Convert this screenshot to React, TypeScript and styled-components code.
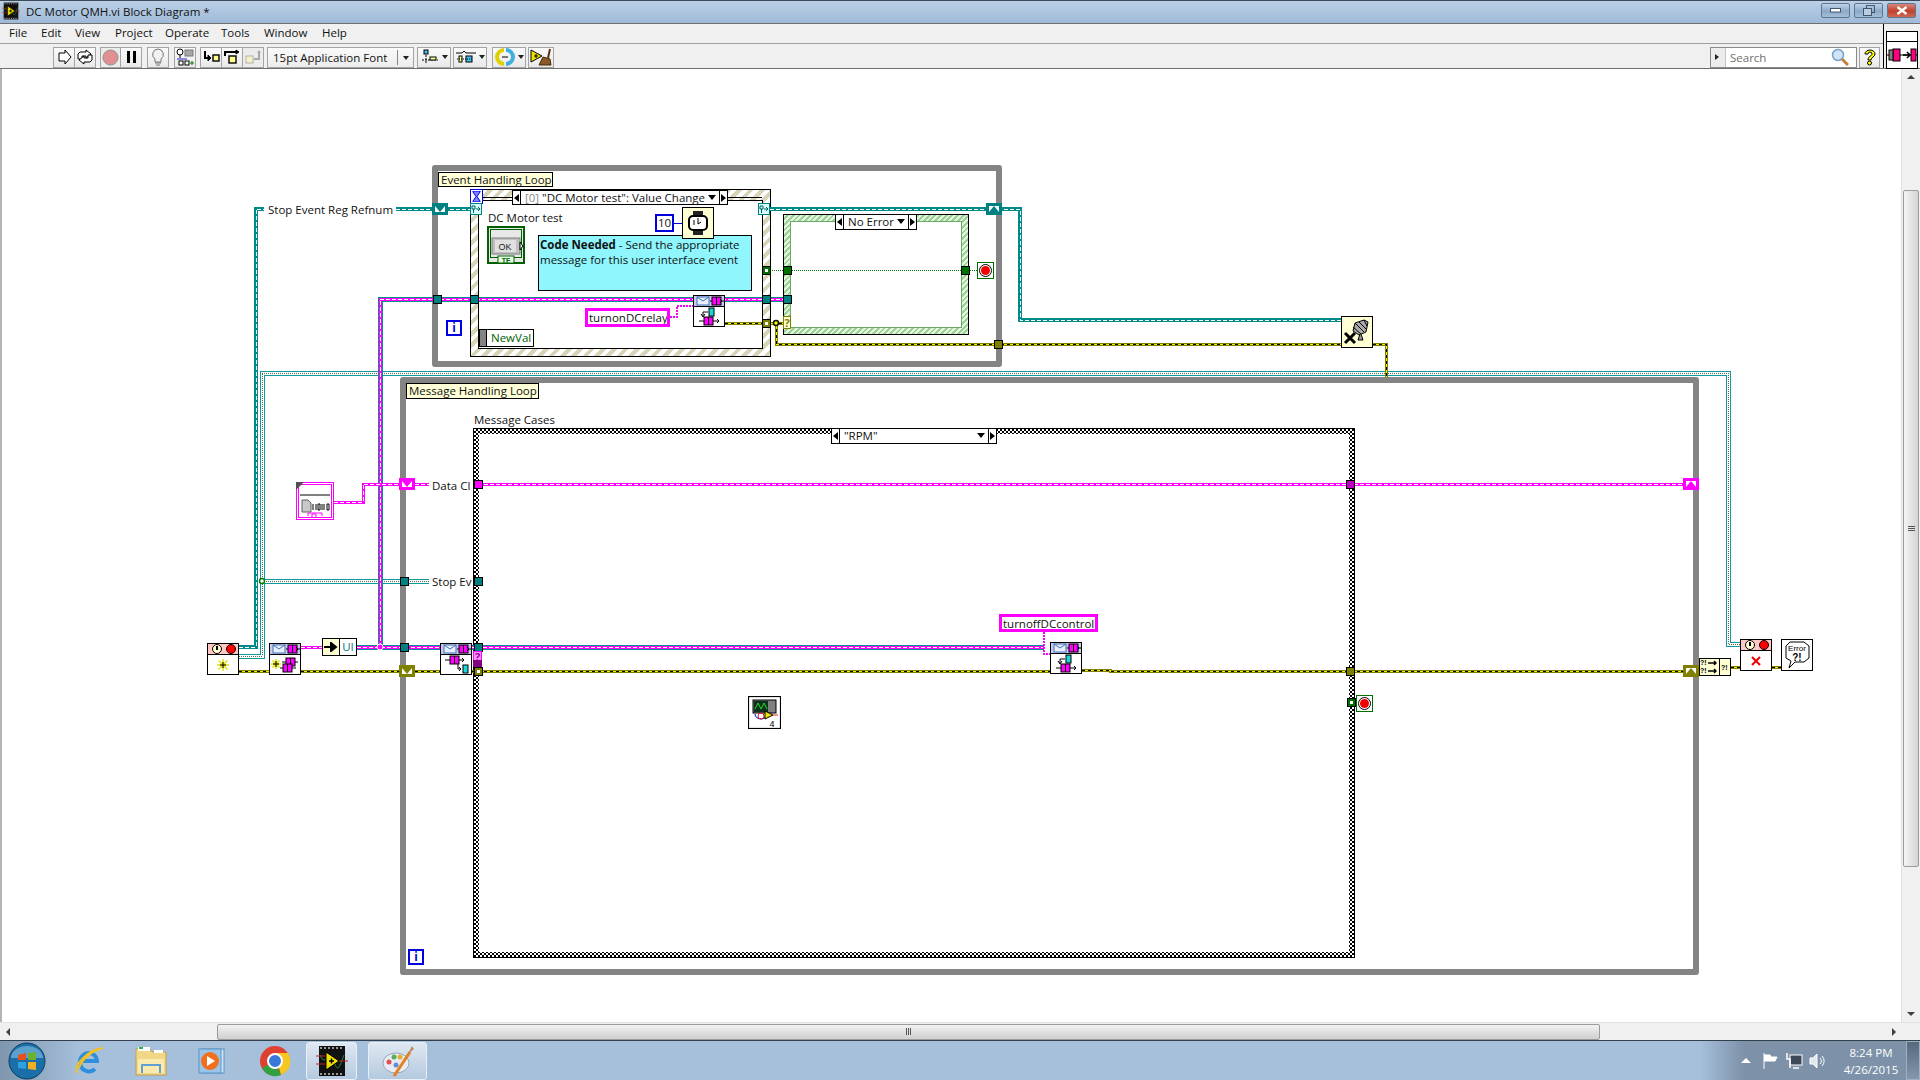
import { FC, ReactNode } from 'react';
import styled, { createGlobalStyle, css } from 'styled-components';

const UI_FONT = `'Open Sans', 'Noto Sans', sans-serif`;
const CANVAS_TOP = 69;

const GlobalStyle = createGlobalStyle`
  html, body {
    margin: 0;
    padding: 0;
    background: #fff;
    overflow: hidden;
  }
  svg { display: block; }
`;

/* ---------- window chrome ---------- */

const Window = styled.div`
  width: 1920px;
  height: 1080px;
  display: flex;
  flex-direction: column;
  font-family: ${UI_FONT};
  font-size: 11.5px;
  overflow: hidden;
`;

const TitleBar = styled.div`
  height: 23px;
  flex-shrink: 0;
  display: flex;
  align-items: center;
  box-sizing: border-box;
  border-top: 1px solid #3c4a58;
  background: linear-gradient(to bottom, #bcd0e6, #9fbad8);
`;

const TitleText = styled.span`
  color: #101010;
  margin: -2px 0 0 6px;
  flex: 1;
`;

const TitleIcon = styled.div`
  margin: -2px 0 0 2px;
`;

const CaptionButton = styled.div<{ $close?: boolean }>`
  width: 29px;
  height: 15px;
  margin-right: 4px;
  margin-top: -4px;
  box-sizing: border-box;
  border: 1px solid #5e7690;
  border-radius: 2px;
  display: flex;
  align-items: center;
  justify-content: center;
  background: ${p => p.$close
    ? 'linear-gradient(to bottom, #d8877a, #c1402c 55%, #cf6a55)'
    : 'linear-gradient(to bottom, #c0d2e6, #8ba9c8 55%, #a4bed8)'};
`;

const ChromeRow = styled.div`
  height: 46px;
  flex-shrink: 0;
  display: flex;
  border-top: 1px solid #6f6f6f;
  box-sizing: border-box;
  border-bottom: 1px solid #6f6f6f;
  background: #f0f0f0;
`;

const ToolArea = styled.div`
  flex: 1;
  display: flex;
  flex-direction: column;
`;

const MenuBar = styled.div`
  height: 20px;
  box-sizing: border-box;
  display: flex;
  align-items: center;
  padding: 0 0 2px 9px;
  border-bottom: 1px solid #a0a0a0;
  color: #111;
`;

const MenuItem = styled.span<{ $w: number }>`
  width: ${p => p.$w}px;
`;

const ToolBar = styled.div`
  flex: 1;
  display: flex;
  align-items: center;
  padding: 2px 3px 0 53px;
`;

const ToolGroup = styled.div<{ $gap?: number }>`
  display: flex;
  margin-right: ${p => p.$gap ?? 4}px;
`;

const ToolButton = styled.div<{ $w?: number; $off?: boolean }>`
  width: ${p => p.$w ?? 21}px;
  height: 21px;
  box-sizing: border-box;
  border: 1px solid #a4a4a4;
  margin-right: -1px;
  display: flex;
  align-items: center;
  justify-content: center;
  gap: 3px;
  background: ${p => p.$off ? '#ececec' : 'linear-gradient(to bottom, #fafafa, #e9e9e9)'};
  &:last-child { margin-right: 0; }
`;

const DropArrow = styled.span`
  width: 0;
  height: 0;
  border: 3px solid transparent;
  border-top: 4px solid #222;
  border-bottom: none;
`;

const FontRing = styled.div`
  width: 147px;
  height: 21px;
  box-sizing: border-box;
  border: 1px solid #a4a4a4;
  margin-right: 3px;
  display: flex;
  align-items: center;
  color: #111;
  padding-left: 5px;
  background: linear-gradient(to bottom, #fafafa, #ececec);
`;

const RingText = styled.span`
  flex: 1;
`;

const RingArrow = styled.span`
  width: 15px;
  height: 15px;
  border-left: 1px solid #888;
  position: relative;
  &::after {
    content: '';
    position: absolute;
    left: 5px;
    top: 6px;
    border: 3px solid transparent;
    border-top: 4px solid #222;
  }
`;

const SearchBox = styled.div`
  margin-left: auto;
  width: 147px;
  height: 21px;
  box-sizing: border-box;
  border: 1px solid #8a8a8a;
  display: flex;
  align-items: center;
  padding-right: 7px;
  background: #fff;
`;

const SearchPin = styled.div`
  width: 14px;
  height: 19px;
  background: #ececec;
  border-right: 1px solid #c4c4c4;
  position: relative;
  &::after {
    content: '';
    position: absolute;
    left: 4px;
    top: 6px;
    border: 3px solid transparent;
    border-left: 4px solid #222;
  }
`;

const SearchText = styled.span`
  flex: 1;
  padding-left: 4px;
  color: #6e6e6e;
`;

const HelpButton = styled(ToolButton)`
  margin: 0 0 0 2px;
`;

const IconPane = styled.div`
  width: 37px;
  box-sizing: border-box;
  border-left: 1px solid #000;
  padding: 7px 2px 0;
  background: #f0f0f0;
`;

const VIIconTop = styled.div`
  height: 9px;
  border: 1px solid #000;
  background: #fff;
`;

const VIIconBottom = styled.div`
  height: 26px;
  border: 1px solid #000;
  border-top: none;
  background: #fff;
  display: flex;
  align-items: center;
  justify-content: center;
`;

/* ---------- diagram canvas ---------- */

const Body = styled.div`
  flex: 1;
  display: flex;
  min-height: 0;
`;

const Canvas = styled.div`
  flex: 1;
  position: relative;
  overflow: hidden;
  background: #fff;
  box-shadow: inset 2px 0 #b4b4b4;
  color: #111;
`;

const WireLayer = styled.svg`
  position: absolute;
  left: 0;
  top: 0;
`;

interface Box {
  $x: number;
  $y: number;
  $w: number;
  $h: number;
}

const placed = css<Box>`
  position: absolute;
  box-sizing: border-box;
  left: ${p => p.$x}px;
  top: ${p => p.$y - CANVAS_TOP}px;
  width: ${p => p.$w}px;
  height: ${p => p.$h}px;
`;

const WhileLoop = styled.div<Box>`
  ${placed};
  border: 6px solid #848484;
  border-radius: 3px;
`;

const frameStyles = {
  event: css`
    padding: 10px 7px 7px;
    background: repeating-linear-gradient(135deg, #ffffff 0 4px, #d8d4b8 4px 8px);
  `,
  noError: css`
    padding: 6px;
    background: repeating-linear-gradient(135deg, #e4f6dc 0 2px, #9ed09a 2px 4px);
  `,
  checker: css`
    padding: 5px;
    background: repeating-conic-gradient(#000 0 25%, #fff 0 50%) 0 0 / 4px 4px;
  `,
};

const StructureFrame = styled.div<Box & { $kind: keyof typeof frameStyles }>`
  ${placed};
  border: 1px solid #000;
  ${p => frameStyles[p.$kind]};
`;

const StructureInner = styled.div<{ $edge?: string }>`
  width: 100%;
  height: 100%;
  box-sizing: border-box;
  background: #fff;
  ${p => p.$edge && `border: 1px solid ${p.$edge};`}
`;

const LoopLabel = styled.div<Box>`
  ${placed};
  background: #ffffd8;
  border: 1px solid #000;
  padding-left: 2px;
  line-height: 14px;
  white-space: nowrap;
  overflow: hidden;
`;

const FreeLabel = styled.span<{ $x: number; $y: number }>`
  position: absolute;
  left: ${p => p.$x}px;
  top: ${p => p.$y - CANVAS_TOP - 8}px;
  line-height: 16px;
  white-space: nowrap;
  padding-right: 2px;
  background: #fff;
`;

const CaseSelector = styled.div<Box>`
  ${placed};
  display: flex;
  align-items: stretch;
  border: 1px solid #000;
  background: #fff;
  line-height: 14px;
  white-space: nowrap;
`;

const SelectorStep = styled.div<{ $next?: boolean }>`
  width: 7px;
  flex-shrink: 0;
  position: relative;
  ${p => p.$next ? 'border-left: 1px solid #000;' : 'border-right: 1px solid #000;'}
  &::after {
    content: '';
    position: absolute;
    top: 3px;
    ${p => p.$next
      ? 'left: 1px; border: 4px solid transparent; border-left: 5px solid #000; border-right: none;'
      : 'right: 1px; border: 4px solid transparent; border-right: 5px solid #000; border-left: none;'}
  }
`;

const SelectorValue = styled.div`
  flex: 1;
  padding-left: 4px;
  position: relative;
  &::after {
    content: '';
    position: absolute;
    right: 3px;
    top: 4px;
    border: 4px solid transparent;
    border-top: 5px solid #000;
    border-bottom: none;
  }
`;

const Dim = styled.span`
  color: #8a8a8a;
`;

const StringConst = styled.div<Box>`
  ${placed};
  border: 3px solid #ff00ff;
  background: #fff;
  line-height: 13px;
  padding-left: 1px;
  white-space: nowrap;
  overflow: hidden;
`;

const NumericConst = styled.div<Box>`
  ${placed};
  border: 2px solid #0000e0;
  background: #fff;
  display: flex;
  align-items: center;
  justify-content: center;
  line-height: 14px;
`;

const IterationTerminal = styled.div<Box>`
  ${placed};
  border: 2px solid #0000e0;
  background: #fff;
  color: #0000e0;
  font-weight: 700;
  display: flex;
  align-items: center;
  justify-content: center;
  line-height: 12px;
`;

const CommentNote = styled.div<Box>`
  ${placed};
  background: #8ef6fc;
  border: 1px solid #000;
  padding: 1px 1px;
  line-height: 15px;
  white-space: nowrap;
`;

const DataNode = styled.div<Box>`
  ${placed};
  display: flex;
  align-items: center;
  color: #006000;
  background: #fff;
  border: 1px solid #000;
  line-height: 14px;
`;

const NodeGrip = styled.div`
  width: 6px;
  height: 100%;
  margin-right: 4px;
  background: #848484;
  border-right: 1px solid #000;
`;

const FunctionNode = styled.div<Box>`
  ${placed};
  background: #fff;
  border: 1px solid #000;
  display: flex;
  flex-direction: column;
`;

const bandTones = { blue: '#cacaf0', pink: '#ffc8c8' };

const NodeBand = styled.div<{ $tone: keyof typeof bandTones }>`
  height: 10px;
  flex-shrink: 0;
  background: ${p => bandTones[p.$tone]};
  border-bottom: 1px solid #000;
`;

const NodeBody = styled.div`
  flex: 1;
  display: flex;
  align-items: center;
  justify-content: center;
`;

const IconNode = styled.div<Box>`
  ${placed};
  background: #ffffd4;
  border: 1px solid #000;
  display: flex;
  align-items: center;
  justify-content: center;
  overflow: hidden;
`;

const WhiteIconNode = styled(IconNode)`
  background: #fff;
`;

const SplitNode = styled.div<Box>`
  ${placed};
  display: flex;
  border: 1px solid #000;
`;

const SplitCell = styled.div<{ $w: number; $white?: boolean }>`
  width: ${p => p.$w}px;
  display: flex;
  align-items: center;
  justify-content: center;
  background: ${p => p.$white ? '#fff' : '#ffffd4'};
  color: #007878;
  border-right: 1px solid #000;
  line-height: 12px;
  &:last-child { border-right: none; flex: 1; }
`;

const FreeIcon = styled.div<Box>`
  ${placed};
`;

const Tunnel = styled.div<{ $cx: number; $cy: number; $fill: string; $edge?: string }>`
  position: absolute;
  box-sizing: border-box;
  width: 9px;
  height: 9px;
  left: ${p => p.$cx - 4.5}px;
  top: ${p => p.$cy - 4.5 - CANVAS_TOP}px;
  background: ${p => p.$fill};
  border: 1px solid ${p => p.$edge ?? '#000'};
`;

const BoolTunnel = styled(Tunnel)`
  &::after {
    content: '';
    position: absolute;
    left: 2px;
    top: 2px;
    width: 3px;
    height: 3px;
    background: #fff;
  }
`;

const ShiftRegister = styled.div<{ $cx: number; $cy: number; $color: string; $up?: boolean }>`
  position: absolute;
  box-sizing: border-box;
  width: 16px;
  height: 12px;
  left: ${p => p.$cx - 8}px;
  top: ${p => p.$cy - 6 - CANVAS_TOP}px;
  border: 3px solid ${p => p.$color};
  background: #fff;
  &::after {
    content: '';
    position: absolute;
    left: 0;
    top: 0;
    border: 5px solid transparent;
    ${p => p.$up
      ? `border-bottom: 6px solid ${p.$color}; border-top: none;`
      : `border-top: 6px solid ${p.$color}; border-bottom: none;`}
  }
`;

const EventRegTerminal = styled.div<Box>`
  ${placed};
  background: #d8ffff;
  border: 1px solid #008080;
  display: flex;
  align-items: center;
  justify-content: center;
`;

const SelectorTerminal = styled.div<Box & { $fill: string; $edge: string }>`
  ${placed};
  background: ${p => p.$fill};
  border: 1px solid ${p => p.$edge};
  display: flex;
  align-items: center;
  justify-content: center;
  font-size: 11px;
  font-weight: 700;
  line-height: 10px;
  color: #808000;
`;

const MagentaQuestion = styled(SelectorTerminal)`
  color: #a000a0;
`;

/* ---------- scroll bars ---------- */

const VScroll = styled.div`
  width: 19px;
  flex-shrink: 0;
  background: #f0f0f0;
  border-left: 1px solid #e0e0e0;
  box-sizing: border-box;
  display: flex;
  flex-direction: column;
  align-items: center;
`;

const ScrollArrow = styled.div<{ $dir: 'up' | 'down' | 'left' | 'right' }>`
  width: 0;
  height: 0;
  flex-shrink: 0;
  border: 4px solid transparent;
  ${p => p.$dir === 'up' && 'border-bottom: 4px solid #404040; border-top: none; margin: 6px 0 0;'}
  ${p => p.$dir === 'down' && 'border-top: 4px solid #404040; border-bottom: none; margin: 0 0 6px;'}
  ${p => p.$dir === 'left' && 'border-right: 4px solid #404040; border-left: none; margin: 0 0 0 6px;'}
  ${p => p.$dir === 'right' && 'border-left: 4px solid #404040; border-right: none; margin: 0 24px 0 0;'}
`;

const VThumb = styled.div`
  width: 16px;
  height: 677px;
  margin-top: 111px;
  margin-bottom: auto;
  box-sizing: border-box;
  border: 1px solid #9c9c9c;
  border-radius: 2px;
  background: linear-gradient(to right, #f4f4f4, #d4d4d4);
  display: flex;
  align-items: center;
  justify-content: center;
`;

const HScroll = styled.div`
  height: 18px;
  flex-shrink: 0;
  display: flex;
  align-items: center;
  background: #f0f0f0;
  border-top: 1px solid #e2e2e2;
  box-sizing: border-box;
`;

const HThumb = styled.div`
  width: 1383px;
  height: 16px;
  margin-left: 207px;
  margin-right: auto;
  box-sizing: border-box;
  border: 1px solid #9c9c9c;
  border-radius: 2px;
  background: linear-gradient(to bottom, #f2f2f2, #cfcfcf);
  display: flex;
  align-items: center;
  justify-content: center;
`;

const Grip = styled.div<{ $vertical?: boolean }>`
  ${p => p.$vertical
    ? 'width: 7px; height: 5px; background: repeating-linear-gradient(to bottom, #555 0 1px, transparent 1px 2px);'
    : 'width: 5px; height: 7px; background: repeating-linear-gradient(to right, #555 0 1px, transparent 1px 2px);'}
`;

/* ---------- taskbar ---------- */

const Taskbar = styled.div`
  height: 40px;
  flex-shrink: 0;
  display: flex;
  align-items: center;
  box-sizing: border-box;
  border-top: 1px solid #30404f;
  background: linear-gradient(to right, #7f96ae 0, #a6bfdb 80px, #a6bfdb 1700px, #7d91a8 1745px);
`;

const StartOrb = styled.div`
  width: 58px;
  display: flex;
  justify-content: center;
  padding-right: 4px;
  box-sizing: border-box;
`;

const TaskIcon = styled.div`
  width: 62px;
  display: flex;
  justify-content: center;
`;

const TaskButton = styled.div<{ $w: number }>`
  width: ${p => p.$w}px;
  height: 38px;
  box-sizing: border-box;
  margin-right: 11px;
  border: 1px solid #e8eff6;
  border-radius: 3px;
  background: linear-gradient(to bottom, #dfe8f2, #b4c9df);
  display: flex;
  align-items: center;
  justify-content: center;
`;

const Tray = styled.div`
  margin-left: auto;
  display: flex;
  align-items: center;
  height: 100%;
`;

const TrayIcon = styled.div`
  width: 24px;
  display: flex;
  justify-content: center;
`;

const Clock = styled.div`
  width: 70px;
  margin-left: 6px;
  text-align: center;
  color: #fff;
  line-height: 17px;
`;

const ShowDesktop = styled.div`
  width: 14px;
  height: 100%;
  border: 1px solid #9fb0c2;
  box-sizing: border-box;
  background: linear-gradient(to bottom, #566a7e, #8496aa);
`;

/* ---------- wires ---------- */

type WireKind = 'refnum' | 'event' | 'queue' | 'cluster' | 'error' | 'bool' | 'thinPink' | 'black' | 'blue';

const wireLayers: Record<WireKind, { color: string; width: number; dash?: string }[]> = {
  refnum: [
    { color: '#008a8a', width: 4 },
    { color: '#ffffff', width: 1, dash: '4 2' },
  ],
  event: [
    { color: '#109a9a', width: 5 },
    { color: '#ffffff', width: 3 },
    { color: '#5a6a50', width: 1, dash: '1 1' },
  ],
  queue: [
    { color: '#009090', width: 5 },
    { color: '#ff00ff', width: 3 },
    { color: '#ffffff', width: 1, dash: '4 2' },
  ],
  cluster: [
    { color: '#ff00ff', width: 3 },
    { color: '#ffffff', width: 1, dash: '4 2' },
  ],
  error: [
    { color: '#808000', width: 3 },
    { color: '#f4f400', width: 1 },
    { color: '#000', width: 1, dash: '3 3' },
  ],
  bool: [{ color: '#008000', width: 1, dash: '1 1' }],
  thinPink: [{ color: '#ff00ff', width: 2, dash: '2 1' }],
  black: [{ color: '#000', width: 1 }],
  blue: [{ color: '#0000e0', width: 1 }],
};

const wires: { kind: WireKind; points: number[][] }[] = [
  { kind: 'event', points: [[239, 656], [262, 656], [262, 373], [1728, 373], [1728, 644], [1741, 644]] },
  { kind: 'event', points: [[262, 581], [429, 581]] },
  { kind: 'refnum', points: [[239, 647], [256, 647], [256, 209], [264, 209]] },
  { kind: 'refnum', points: [[396, 209], [470, 209]] },
  { kind: 'refnum', points: [[770, 209], [1020, 209], [1020, 320], [1341, 320]] },
  { kind: 'queue', points: [[380, 647], [380, 299], [790, 299]] },
  { kind: 'queue', points: [[357, 647], [1044, 647]] },
  { kind: 'cluster', points: [[301, 647], [322, 647]] },
  { kind: 'cluster', points: [[334, 502], [363, 502], [363, 484], [399, 484]] },
  { kind: 'cluster', points: [[415, 484], [429, 484]] },
  { kind: 'cluster', points: [[478, 484], [1691, 484]] },
  { kind: 'error', points: [[239, 671], [269, 671]] },
  { kind: 'error', points: [[301, 671], [440, 671]] },
  { kind: 'error', points: [[472, 671], [1050, 671]] },
  { kind: 'error', points: [[1082, 670], [1110, 670], [1110, 671], [1699, 671]] },
  { kind: 'error', points: [[1731, 667], [1741, 667]] },
  { kind: 'error', points: [[1772, 667], [1781, 667]] },
  { kind: 'error', points: [[725, 323], [787, 323]] },
  { kind: 'error', points: [[776, 323], [776, 344], [1341, 344]] },
  { kind: 'error', points: [[1373, 344], [1386, 344], [1386, 377]] },
  { kind: 'bool', points: [[770, 270], [977, 270]] },
  { kind: 'thinPink', points: [[670, 317], [677, 317], [677, 306], [693, 306]] },
  { kind: 'thinPink', points: [[1044, 632], [1044, 654], [1050, 654]] },
  { kind: 'black', points: [[483, 197], [512, 197]] },
  { kind: 'black', points: [[728, 197], [762, 197]] },
  { kind: 'blue', points: [[674, 223], [682, 223]] },
];

const Wires: FC = () => (
  <WireLayer width={1901} height={953} viewBox={`0 ${CANVAS_TOP} 1901 953`}>
    {wires.map((wire, i) =>
      wireLayers[wire.kind].map((layer, j) => (
        <polyline
          key={`${i}-${j}`}
          points={wire.points.map(p => p.join(',')).join(' ')}
          fill="none"
          stroke={layer.color}
          strokeWidth={layer.width}
          strokeDasharray={layer.dash}
          shapeRendering="crispEdges"
        />
      ))
    )}
    <circle cx={262} cy={581} r={2.5} fill="#fff" stroke="#008000" strokeWidth={1.5} />
    <circle cx={380} cy={647} r={3} fill="#ff00ff" stroke="#fff" strokeWidth={1} />
    <circle cx={776} cy={323} r={2.5} fill="#f4f400" stroke="#101000" strokeWidth={1.5} />
  </WireLayer>
);

/* ---------- small drawings ---------- */

const Svg: FC<{ w: number; h: number; children: ReactNode }> = ({ w, h, children }) => (
  <svg width={w} height={h} viewBox={`0 0 ${w} ${h}`}>{children}</svg>
);

const QueueBox: FC<{ x: number; y: number }> = ({ x, y }) => (
  <g>
    <rect x={x} y={y} width={9} height={8} fill="#ff00ff" stroke="#000" />
    <line x1={x + 4.5} y1={y} x2={x + 4.5} y2={y + 8} stroke="#000" />
  </g>
);

const EnvelopeBand: FC = () => (
  <Svg w={30} h={10}>
    <rect x={3} y={1} width={12} height={8} fill="#e8f0ff" stroke="#4070b0" />
    <path d="M3 1l6 4 6-4" fill="none" stroke="#4070b0" />
    <line x1={16} y1={5} x2={30} y2={5} stroke="#000" />
    <QueueBox x={18} y={1} />
    <path d="M26 3l2 2-2 2" fill="none" stroke="#000" />
  </Svg>
);

const EnqueueBody: FC = () => (
  <Svg w={30} h={20}>
    <rect x={15} y={1} width={5} height={8} fill="#18d8d8" stroke="#000" />
    <path d="M14 5H9v4M7 7l2 3 2-3" fill="none" stroke="#000" />
    <line x1={5} y1={14} x2={25} y2={14} stroke="#000" />
    <QueueBox x={10} y={10} />
    <path d="M23 12l2 2-2 2" fill="none" stroke="#000" />
  </Svg>
);

const ObtainBody: FC = () => (
  <Svg w={30} h={20}>
    <path d="M6 4v10M1 9h10M2.5 5.5l7 7M9.5 5.5l-7 7" stroke="#e0e000" strokeWidth={1.5} />
    <path d="M6 6v6M3 9h6" stroke="#000" />
    <line x1={12} y1={7} x2={28} y2={7} stroke="#000" />
    <line x1={10} y1={13} x2={26} y2={13} stroke="#000" />
    <QueueBox x={16} y={3} />
    <QueueBox x={13} y={9} />
  </Svg>
);

const ReleaseBody: FC = () => (
  <Svg w={30} h={20}>
    <line x1={4} y1={5} x2={23} y2={5} stroke="#000" />
    <QueueBox x={9} y={1} />
    <path d="M21 3l2 2-2 2" fill="none" stroke="#000" />
    <path d="M17 9v5h3M18 12l2 2-2 2" fill="none" stroke="#000" />
    <rect x={22} y={10} width={5} height={8} fill="#18d8d8" stroke="#000" />
  </Svg>
);

const EventBand: FC = () => (
  <Svg w={30} h={10}>
    <circle cx={9} cy={5} r={4.5} fill="#ffffd0" stroke="#000" />
    <rect x={8} y={2} width={2} height={4} fill="#000" />
    <circle cx={23} cy={5} r={4.5} fill="#f00" stroke="#000" />
  </Svg>
);

const StopButton: FC = () => (
  <Svg w={17} h={17}>
    <rect x={0.5} y={0.5} width={16} height={16} fill="#fff" stroke="#007000" />
    <circle cx={8.5} cy={8.5} r={6} fill="#fff" stroke="#000" />
    <circle cx={8.5} cy={8.5} r={4.5} fill="#f00000" />
  </Svg>
);

const OkTerminal: FC = () => (
  <Svg w={38} h={38}>
    <rect x={1} y={1} width={36} height={36} fill="#e8e8e8" stroke="#006000" strokeWidth={2} />
    <rect x={3.5} y={3.5} width={31} height={28} fill="none" stroke="#006000" />
    <rect x={5} y={12} width={28} height={16} fill="#c0c0c0" stroke="#808080" />
    <rect x={8} y={14} width={21} height={12} fill="#e0e0e0" />
    <text x={18} y={24} fontSize={9} fontFamily="Liberation Sans, sans-serif" textAnchor="middle" fill="#222">OK</text>
    <path d="M33 16l3 4-3 4z" fill="#fff" stroke="#000" />
    <rect x={11} y={30} width={16} height={7} fill="#e8ffe8" stroke="#006000" />
    <text x={19} y={36.5} fontSize={7} fontWeight={700} fontFamily="Liberation Sans, sans-serif" textAnchor="middle" fill="#006000">TF</text>
  </Svg>
);

const WatchIcon: FC = () => (
  <Svg w={24} h={24}>
    <rect x={7} y={0} width={10} height={24} fill="#222" />
    <rect x={3} y={5} width={18} height={14} rx={4} fill="#fff" stroke="#000" strokeWidth={2} />
    <path d="M12 7v6M12 13l3-2" stroke="#000" />
    <path d="M8 9v5" stroke="#000" />
  </Svg>
);

const DataFileIcon: FC = () => (
  <Svg w={38} h={38}>
    <rect x={0.5} y={0.5} width={37} height={37} fill="#fff" stroke="#ff00ff" />
    <rect x={2.5} y={2.5} width={33} height={33} fill="#fff" stroke="#ff00ff" />
    <path d="M0 0h8L0 8z" fill="#505050" />
    <line x1={4} y1={13} x2={34} y2={13} stroke="#000" />
    <path d="M6 18h6l3 3v9H6z" fill="#c8c8c8" stroke="#606060" />
    <path d="M17 22v6M20 22v6M22 22h2v6h-2zM26 22v6M28 22v6M31 22h2v6h-2z" fill="none" stroke="#000" />
    <path d="M12 34v-3h14v3M16 35v-3h4v3" fill="none" stroke="#ff00ff" />
  </Svg>
);

const UnregisterIcon: FC = () => (
  <Svg w={30} h={30}>
    <path d="M13 6l9-3 4 2-2 10-7 3-6-4z" fill="#aaa" stroke="#000" />
    <path d="M13 6l9 9M17 5l7 7M11 10l8 7M22 3l3 6" stroke="#000" />
    <path d="M19 17l2 6h-5l2-6" fill="#999" stroke="#000" />
    <path d="M3 16l10 10M13 16L3 26" stroke="#000" strokeWidth={3} />
  </Svg>
);

const MergeIcon: FC = () => (
  <Svg w={19} h={16}>
    <text x={0} y={6} fontSize={7} fontWeight={700} fontFamily="Liberation Sans, sans-serif">?!</text>
    <text x={0} y={14} fontSize={7} fontWeight={700} fontFamily="Liberation Sans, sans-serif">?!</text>
    <path d="M8 4h8M14 2l2 2-2 2M8 12h8M14 10l2 2-2 2" fill="none" stroke="#000" strokeWidth={1.4} />
  </Svg>
);

const ErrorBubbleIcon: FC = () => (
  <Svg w={30} h={30}>
    <path d="M8 2h14l5 4v12l-5 4H13l-6 6 2-7-5-3V6z" fill="#fff" stroke="#000" />
    <text x={15} y={11} fontSize={8} fontFamily="Liberation Sans, sans-serif" textAnchor="middle">Error</text>
    <text x={15} y={21} fontSize={10} fontWeight={700} fontFamily="Liberation Sans, sans-serif" textAnchor="middle">?!</text>
  </Svg>
);

const ScopeIcon: FC = () => (
  <Svg w={33} h={33}>
    <rect x={0.5} y={0.5} width={32} height={32} fill="#fff" stroke="#000" strokeWidth={1.2} />
    <rect x={5} y={4} width={23} height={13} fill="#808080" stroke="#000" />
    <rect x={6} y={5} width={14} height={11} fill="#103020" />
    <path d="M7 13l3-6 3 6 3-6 3 6" fill="none" stroke="#20e020" />
    <path d="M7 18a6 5 0 0 0 12 0" fill="none" stroke="#0000c0" />
    <circle cx={13} cy={20} r={3} fill="none" stroke="#e02020" />
    <path d="M17 15l8 4-8 4z" fill="#f0e000" stroke="#000" />
    <path d="M25 19h5" stroke="#e02020" />
    <text x={24} y={31} fontSize={9} fontFamily="Liberation Sans, sans-serif" textAnchor="middle">4</text>
  </Svg>
);

const ToolIcons: Record<string, ReactNode> = {
  run: <Svg w={16} h={16}><path d="M3 4h6V1l6 7-6 7v-3H3z" fill="#fff" stroke="#000" /></Svg>,
  runCont: (
    <Svg w={16} h={16}>
      <path d="M3 3h6V1l5 4-5 4V7H5v3H1V5z" fill="#fff" stroke="#000" />
      <path d="M13 13H7v2l-5-4 5-4v2h4V6h4v5z" fill="#fff" stroke="#000" />
    </Svg>
  ),
  abort: <Svg w={17} h={17}><circle cx={8.5} cy={8.5} r={7.5} fill="#e09090" stroke="#909090" /></Svg>,
  pause: <Svg w={13} h={14}><path d="M2 1h3v12H2zM8 1h3v12H8z" fill="#000" /></Svg>,
  bulb: (
    <Svg w={14} h={18}>
      <path d="M7 1a5.5 5.5 0 0 0-3 10v3h6v-3A5.5 5.5 0 0 0 7 1z" fill="#f2f2f2" stroke="#777" />
      <path d="M4 15h6M5 17h4" stroke="#777" />
    </Svg>
  ),
  retain: (
    <Svg w={18} h={18}>
      <circle cx={4} cy={4} r={3} fill="#fff" stroke="#000" />
      <rect x={9} y={2} width={8} height={6} fill="#a8a8a8" stroke="#777" />
      <path d="M4 7v3" stroke="#000" />
      <path d="M1 11h10" stroke="#2020d0" />
      <rect x={3} y={13} width={4} height={4} fill="#fff" stroke="#000" />
      <rect x={9} y={13} width={4} height={4} fill="#fff" stroke="#000" />
      <path d="M14 15h4M16 13v4" stroke="#008000" />
    </Svg>
  ),
  stepInto: (
    <Svg w={17} h={14}>
      <path d="M2 1v7h4" fill="none" stroke="#000" strokeWidth={2} />
      <path d="M5 5l3 3-3 3z" fill="#000" stroke="#000" />
      <rect x={10} y={5} width={6} height={6} fill="#ffff90" stroke="#000" strokeWidth={1.4} />
    </Svg>
  ),
  stepOver: (
    <Svg w={17} h={16}>
      <path d="M1 7V3h12" fill="none" stroke="#000" strokeWidth={2} />
      <path d="M12 1l3 2-3 2z" fill="#000" stroke="#000" />
      <rect x={5} y={7} width={7} height={7} fill="#ffff90" stroke="#000" strokeWidth={1.4} />
    </Svg>
  ),
  stepOut: (
    <Svg w={17} h={16}>
      <rect x={1} y={7} width={7} height={7} fill="#f4f4c8" stroke="#b0b0b0" />
      <path d="M9 10h5V4" fill="none" stroke="#a8a8a8" strokeWidth={2} />
      <path d="M12 4l2-3 2 3z" fill="#a8a8a8" />
    </Svg>
  ),
  align: (
    <Svg w={18} h={16}>
      <rect x={3} y={1} width={4} height={4} fill="#40c0f0" stroke="#000" />
      <path d="M5 6v8M1 11h16" stroke="#000" strokeDasharray="2 1" />
      <rect x={9} y={8} width={6} height={3} fill="#ffff90" stroke="#000" />
    </Svg>
  ),
  distribute: (
    <Svg w={20} h={14}>
      <path d="M0 3h6l2-2 2 2h10" fill="none" stroke="#000" />
      <rect x={3} y={6} width={3} height={6} fill="#ffff90" stroke="#000" />
      <rect x={10} y={6} width={6} height={6} fill="#40c0f0" stroke="#000" />
      <path d="M1 9h15" stroke="#000" strokeDasharray="1 1" />
    </Svg>
  ),
  reorder: (
    <Svg w={20} h={18}>
      <path d="M9 2a7 7 0 0 0 0 14" fill="none" stroke="#e0d000" strokeWidth={4} />
      <path d="M11 2a7 7 0 0 1 0 14" fill="none" stroke="#40b0e0" strokeWidth={4} />
      <path d="M7 9h6" stroke="#000" />
    </Svg>
  ),
  cleanup: (
    <Svg w={22} h={18}>
      <path d="M1 2l11 6-11 6z" fill="#f0e000" stroke="#000" />
      <path d="M4 8h4M6 6v4" stroke="#000" />
      <path d="M20 1l-2 9" stroke="#5a3410" strokeWidth={2} />
      <path d="M9 17l4-8 7 2 1 6z" fill="#8a5a28" stroke="#4a2a08" />
    </Svg>
  ),
  help: (
    <Svg w={14} h={17}>
      <path d="M2 5a5 4 0 0 1 10 0c0 3-4 3-4 6H5c0-4 4-4 4-6a2 2 0 0 0-4 0z" fill="#ffff00" stroke="#000" />
      <circle cx={6.5} cy={14} r={2} fill="#ffff00" stroke="#000" />
    </Svg>
  ),
  search: (
    <Svg w={18} h={18}>
      <circle cx={7} cy={7} r={5.5} fill="#cfe6fa" stroke="#7aa0c4" strokeWidth={1.5} />
      <path d="M11 11l6 6" stroke="#c08040" strokeWidth={3} />
    </Svg>
  ),
};

const LabviewLogo: FC<{ size: number }> = ({ size }) => (
  <svg width={size} height={size} viewBox="0 0 32 32">
    <rect x={3} y={1} width={26} height={30} fill="#111" />
    <path d="M4 3h24M4 29h24" stroke="#999" strokeWidth={2} strokeDasharray="2 2" />
    <path d="M4 10c6 14 10-8 14 6s6 4 10-6" fill="none" stroke="#2a8a4a" />
    <path d="M0 11h12M0 19h10" stroke="#c02020" />
    <path d="M10 7l13 9-13 9z" fill="#f0e000" stroke="#000" />
    <path d="M13 16h5M15.5 13.5v5" stroke="#000" strokeWidth={1.5} />
    <path d="M23 16h9" stroke="#c02020" />
  </svg>
);

const App: FC = () => (
  <>
    <GlobalStyle />
    <Window>
      <TitleBar>
        <TitleIcon><LabviewLogo size={18} /></TitleIcon>
        <TitleText>DC Motor QMH.vi Block Diagram *</TitleText>
        <CaptionButton>
          <Svg w={11} h={5}><rect x={0.5} y={0.5} width={10} height={3.5} fill="#fff" stroke="#44566a" /></Svg>
        </CaptionButton>
        <CaptionButton>
          <Svg w={12} h={11}>
            <rect x={3.5} y={0.5} width={8} height={7} fill="none" stroke="#44566a" />
            <rect x={0.5} y={3.5} width={8} height={7} fill="#b9cde2" stroke="#44566a" />
          </Svg>
        </CaptionButton>
        <CaptionButton $close>
          <Svg w={12} h={9}><path d="M1.5 1l9 7M10.5 1l-9 7" stroke="#fff" strokeWidth={2.4} /></Svg>
        </CaptionButton>
      </TitleBar>

      <ChromeRow>
        <ToolArea>
          <MenuBar>
            <MenuItem $w={32}>File</MenuItem>
            <MenuItem $w={34}>Edit</MenuItem>
            <MenuItem $w={40}>View</MenuItem>
            <MenuItem $w={50}>Project</MenuItem>
            <MenuItem $w={56}>Operate</MenuItem>
            <MenuItem $w={43}>Tools</MenuItem>
            <MenuItem $w={58}>Window</MenuItem>
            <MenuItem $w={30}>Help</MenuItem>
          </MenuBar>
          <ToolBar>
            <ToolGroup>
              <ToolButton $w={22}>{ToolIcons.run}</ToolButton>
              <ToolButton $w={22}>{ToolIcons.runCont}</ToolButton>
            </ToolGroup>
            <ToolGroup $gap={5}>
              <ToolButton $off>{ToolIcons.abort}</ToolButton>
              <ToolButton $w={22}>{ToolIcons.pause}</ToolButton>
            </ToolGroup>
            <ToolGroup $gap={5}>
              <ToolButton $w={22}>{ToolIcons.bulb}</ToolButton>
            </ToolGroup>
            <ToolGroup>
              <ToolButton $w={22}>{ToolIcons.retain}</ToolButton>
            </ToolGroup>
            <ToolGroup $gap={3}>
              <ToolButton $w={22}>{ToolIcons.stepInto}</ToolButton>
              <ToolButton $w={22}>{ToolIcons.stepOver}</ToolButton>
              <ToolButton $w={22} $off>{ToolIcons.stepOut}</ToolButton>
            </ToolGroup>
            <FontRing>
              <RingText>15pt Application Font</RingText>
              <RingArrow />
            </FontRing>
            <ToolGroup $gap={2}>
              <ToolButton $w={34}>{ToolIcons.align}<DropArrow /></ToolButton>
            </ToolGroup>
            <ToolGroup $gap={5}>
              <ToolButton $w={34}>{ToolIcons.distribute}<DropArrow /></ToolButton>
            </ToolGroup>
            <ToolGroup $gap={2}>
              <ToolButton $w={34}>{ToolIcons.reorder}<DropArrow /></ToolButton>
            </ToolGroup>
            <ToolGroup>
              <ToolButton $w={26}>{ToolIcons.cleanup}</ToolButton>
            </ToolGroup>
            <SearchBox>
              <SearchPin />
              <SearchText>Search</SearchText>
              {ToolIcons.search}
            </SearchBox>
            <HelpButton>{ToolIcons.help}</HelpButton>
          </ToolBar>
        </ToolArea>
        <IconPane>
          <VIIconTop />
          <VIIconBottom>
            <Svg w={30} h={16}>
              <path d="M0 8h30" stroke="#000" />
              <rect x={6} y={2} width={7} height={12} fill="#ff0080" stroke="#000" />
              <rect x={2} y={3} width={4} height={10} fill="#808080" stroke="#000" />
              <path d="M16 8h7M20 5l3 3-3 3" fill="none" stroke="#000" strokeWidth={1.5} />
              <rect x={24} y={2} width={5} height={12} fill="#ff0080" stroke="#000" />
            </Svg>
          </VIIconBottom>
        </IconPane>
      </ChromeRow>

      <Body>
        <Canvas>
          <WhileLoop $x={432} $y={165} $w={570} $h={202} />
          <WhileLoop $x={400} $y={377} $w={1299} $h={598} />
          <StructureFrame $kind="event" $x={470} $y={189} $w={301} $h={168}><StructureInner $edge="#000" /></StructureFrame>
          <StructureFrame $kind="noError" $x={783} $y={214} $w={186} $h={121}><StructureInner $edge="#6aa86a" /></StructureFrame>
          <StructureFrame $kind="checker" $x={473} $y={428} $w={882} $h={530}><StructureInner /></StructureFrame>

          <LoopLabel $x={438} $y={172} $w={115} $h={15}>Event Handling Loop</LoopLabel>
          <LoopLabel $x={406} $y={383} $w={133} $h={16}>Message Handling Loop</LoopLabel>

          <Wires />

          <CaseSelector $x={512} $y={190} $w={216} $h={15}>
            <SelectorStep />
            <SelectorValue><Dim>[0]</Dim> &quot;DC Motor test&quot;: Value Change</SelectorValue>
            <SelectorStep $next />
          </CaseSelector>
          <CaseSelector $x={835} $y={214} $w={82} $h={16}>
            <SelectorStep />
            <SelectorValue>No Error</SelectorValue>
            <SelectorStep $next />
          </CaseSelector>
          <CaseSelector $x={831} $y={428} $w={166} $h={16}>
            <SelectorStep />
            <SelectorValue>&quot;RPM&quot;</SelectorValue>
            <SelectorStep $next />
          </CaseSelector>

          <FreeLabel $x={268} $y={210}>Stop Event Reg Refnum</FreeLabel>
          <FreeLabel $x={488} $y={218}>DC Motor test</FreeLabel>
          <FreeLabel $x={474} $y={420}>Message Cases</FreeLabel>
          <FreeLabel $x={432} $y={486}>Data Cl</FreeLabel>
          <FreeLabel $x={432} $y={582}>Stop Ev</FreeLabel>

          <SelectorTerminal $x={470} $y={189} $w={13} $h={15} $fill="#fff" $edge="#0000e0">
            <Svg w={9} h={11}><path d="M1 0h7v1L5 5.5 8 10v1H1v-1l3-4.5L1 1z" fill="#8080ff" stroke="#0000e0" /></Svg>
          </SelectorTerminal>
          <EventRegTerminal $x={470} $y={203} $w={12} $h={12}>
            <Svg w={10} h={10}><path d="M1 2h3v3H1zM2.5 5v4M5 5h4M7 3l2 2-2 2" fill="none" stroke="#006060" /></Svg>
          </EventRegTerminal>
          <EventRegTerminal $x={758} $y={203} $w={12} $h={12}>
            <Svg w={10} h={10}><path d="M1 2h3v3H1zM2.5 5v4M5 5h4M7 3l2 2-2 2" fill="none" stroke="#006060" /></Svg>
          </EventRegTerminal>

          <FreeIcon $x={487} $y={226} $w={38} $h={38}><OkTerminal /></FreeIcon>
          <CommentNote $x={538} $y={235} $w={214} $h={56}>
            <strong>Code Needed</strong> - Send the appropriate<br />message for this user interface event
          </CommentNote>
          <NumericConst $x={655} $y={214} $w={19} $h={18}>10</NumericConst>
          <IconNode $x={682} $y={207} $w={32} $h={32}><WatchIcon /></IconNode>
          <StringConst $x={585} $y={308} $w={85} $h={19}>turnonDCrelay</StringConst>
          <FunctionNode $x={693} $y={295} $w={32} $h={32}>
            <NodeBand $tone="blue"><EnvelopeBand /></NodeBand>
            <NodeBody><EnqueueBody /></NodeBody>
          </FunctionNode>
          <IterationTerminal $x={446} $y={320} $w={16} $h={16}>i</IterationTerminal>
          <DataNode $x={479} $y={329} $w={55} $h={18}>
            <NodeGrip />NewVal
          </DataNode>

          <ShiftRegister $cx={440} $cy={209} $color="#008080" />
          <ShiftRegister $cx={994} $cy={209} $color="#008080" $up />
          <Tunnel $cx={437} $cy={299} $fill="#008080" />
          <Tunnel $cx={474} $cy={299} $fill="#008080" />
          <Tunnel $cx={766} $cy={299} $fill="#008080" />
          <Tunnel $cx={787} $cy={299} $fill="#008080" />
          <BoolTunnel $cx={766} $cy={270} $fill="#007000" />
          <Tunnel $cx={787} $cy={270} $fill="#007000" />
          <Tunnel $cx={965} $cy={270} $fill="#007000" />
          <BoolTunnel $cx={766} $cy={323} $fill="#808000" />
          <Tunnel $cx={998} $cy={344} $fill="#808000" />
          <SelectorTerminal $x={783} $y={316} $w={8} $h={13} $fill="#ffffd4" $edge="#808000">?</SelectorTerminal>
          <FreeIcon $x={977} $y={262} $w={17} $h={17}><StopButton /></FreeIcon>

          <IconNode $x={1341} $y={316} $w={32} $h={32}><UnregisterIcon /></IconNode>

          <FreeIcon $x={296} $y={482} $w={38} $h={38}><DataFileIcon /></FreeIcon>
          <ShiftRegister $cx={407} $cy={484} $color="#ff00ff" />
          <ShiftRegister $cx={407} $cy={671} $color="#808000" />
          <ShiftRegister $cx={1691} $cy={484} $color="#ff00ff" $up />
          <ShiftRegister $cx={1691} $cy={671} $color="#808000" $up />
          <Tunnel $cx={404} $cy={581} $fill="#008080" />
          <Tunnel $cx={404} $cy={647} $fill="#008080" />
          <Tunnel $cx={478} $cy={484} $fill="#ff00ff" />
          <Tunnel $cx={1350} $cy={484} $fill="#c000c0" />
          <Tunnel $cx={478} $cy={581} $fill="#008080" />
          <Tunnel $cx={478} $cy={647} $fill="#008080" />
          <MagentaQuestion $x={473} $y={651} $w={9} $h={12} $fill="#ff90ff" $edge="#ff00ff">?</MagentaQuestion>
          <SelectorTerminal $x={473} $y={660} $w={9} $h={7} $fill="#800080" $edge="#800080" />
          <BoolTunnel $cx={478} $cy={671} $fill="#808000" />
          <Tunnel $cx={1350} $cy={671} $fill="#808000" />
          <BoolTunnel $cx={1351} $cy={702} $fill="#007000" />
          <FreeIcon $x={1356} $y={695} $w={17} $h={17}><StopButton /></FreeIcon>

          <FunctionNode $x={207} $y={643} $w={32} $h={32}>
            <NodeBand $tone="pink"><EventBand /></NodeBand>
            <NodeBody>
              <Svg w={12} h={12}>
                <path d="M6 0v12M0 6h12M1.5 1.5l9 9M10.5 1.5l-9 9" stroke="#e0e000" strokeWidth={1.4} />
                <path d="M6 3v6M3 6h6" stroke="#000" />
              </Svg>
            </NodeBody>
          </FunctionNode>
          <FunctionNode $x={269} $y={643} $w={32} $h={32}>
            <NodeBand $tone="blue"><EnvelopeBand /></NodeBand>
            <NodeBody><ObtainBody /></NodeBody>
          </FunctionNode>
          <SplitNode $x={322} $y={638} $w={35} $h={18}>
            <SplitCell $w={16}>
              <Svg w={14} h={10}><path d="M0 5h8M7 1l5 4-5 4z" fill="#000" stroke="#000" strokeWidth={2} /></Svg>
            </SplitCell>
            <SplitCell $w={18} $white>UI</SplitCell>
          </SplitNode>
          <FunctionNode $x={440} $y={643} $w={32} $h={32}>
            <NodeBand $tone="blue"><EnvelopeBand /></NodeBand>
            <NodeBody><ReleaseBody /></NodeBody>
          </FunctionNode>

          <StringConst $x={999} $y={614} $w={99} $h={18}>turnoffDCcontrol</StringConst>
          <FunctionNode $x={1050} $y={642} $w={32} $h={32}>
            <NodeBand $tone="blue"><EnvelopeBand /></NodeBand>
            <NodeBody><EnqueueBody /></NodeBody>
          </FunctionNode>
          <FreeIcon $x={748} $y={696} $w={33} $h={33}><ScopeIcon /></FreeIcon>
          <IterationTerminal $x={408} $y={949} $w={16} $h={16}>i</IterationTerminal>

          <SplitNode $x={1699} $y={658} $w={32} $h={18}>
            <SplitCell $w={19}><MergeIcon /></SplitCell>
            <SplitCell $w={11}>
              <Svg w={8} h={8}><text x={0} y={7} fontSize={7} fontWeight={700} fontFamily="Liberation Sans, sans-serif">?!</text></Svg>
            </SplitCell>
          </SplitNode>
          <FunctionNode $x={1740} $y={639} $w={32} $h={32}>
            <NodeBand $tone="pink"><EventBand /></NodeBand>
            <NodeBody>
              <Svg w={12} h={12}><path d="M2 2l8 8M10 2l-8 8" stroke="#f00000" strokeWidth={2} /></Svg>
            </NodeBody>
          </FunctionNode>
          <WhiteIconNode $x={1781} $y={639} $w={32} $h={32}><ErrorBubbleIcon /></WhiteIconNode>
        </Canvas>
        <VScroll>
          <ScrollArrow $dir="up" />
          <VThumb><Grip $vertical /></VThumb>
          <ScrollArrow $dir="down" />
        </VScroll>
      </Body>

      <HScroll>
        <ScrollArrow $dir="left" />
        <HThumb><Grip /></HThumb>
        <ScrollArrow $dir="right" />
      </HScroll>

      <Taskbar>
        <StartOrb>
          <Svg w={38} h={38}>
            <circle cx={19} cy={19} r={18} fill="#1a6fa8" stroke="#0e3d60" />
            <path d="M3 16a16 12 0 0 1 32 0z" fill="#9ed4f0" opacity={0.5} />
            <path d="M10 13l8-2v7h-8z" fill="#e85020" />
            <path d="M20 11l8-1v8h-8z" fill="#70b030" />
            <path d="M10 20h8v7l-8-1z" fill="#30a0e0" />
            <path d="M20 20h8v8l-8-1z" fill="#f0b020" />
          </Svg>
        </StartOrb>
        <TaskIcon>
          <Svg w={32} h={32}>
            <path d="M16 8a9 9 0 0 0-9 9 9 9 0 0 0 15 7" fill="none" stroke="#2f8fdc" strokeWidth={4} />
            <path d="M8 16h16a8 8 0 0 0-8-8" fill="none" stroke="#2f8fdc" strokeWidth={4} />
            <path d="M4 28C0 20 16 4 30 3c-6 1-20 8-24 20" fill="none" stroke="#f2c020" strokeWidth={2} />
          </Svg>
        </TaskIcon>
        <TaskIcon>
          <Svg w={34} h={32}>
            <path d="M2 4h14l2 3h14v23H2z" fill="#f0d888" stroke="#c0a050" />
            <rect x={4} y={2} width={12} height={4} fill="#fff" />
            <rect x={5} y={2} width={4} height={2} fill="#30b040" />
            <rect x={20} y={5} width={9} height={3} fill="#fff" />
            <path d="M4 14h26v14H4z" fill="#fbeab0" />
            <path d="M8 28v-8h18v8" fill="none" stroke="#60a0d0" strokeWidth={2} />
          </Svg>
        </TaskIcon>
        <TaskIcon>
          <Svg w={30} h={30}>
            <rect x={4} y={3} width={22} height={24} fill="#cfe4f6" stroke="#5a94c8" />
            <rect x={1} y={3} width={22} height={24} fill="#9ac4e8" stroke="#5a94c8" />
            <circle cx={12} cy={15} r={9} fill="#f07020" />
            <path d="M9 10l8 5-8 5z" fill="#fff" />
          </Svg>
        </TaskIcon>
        <TaskIcon>
          <Svg w={32} h={32}>
            <circle cx={16} cy={16} r={15} fill="#e04030" />
            <path d="M16 16L3 23A15 15 0 0 0 22 30z" fill="#30a040" />
            <path d="M16 8h13a15 15 0 0 1-7 22z" fill="#f4c820" />
            <circle cx={16} cy={16} r={7} fill="#3878d8" stroke="#fff" strokeWidth={2} />
          </Svg>
        </TaskIcon>
        <TaskButton $w={51}><LabviewLogo size={32} /></TaskButton>
        <TaskButton $w={59}>
          <Svg w={32} h={32}>
            <ellipse cx={14} cy={18} rx={13} ry={10} fill="#e8ecf2" stroke="#98a8b8" />
            <circle cx={7} cy={17} r={2.5} fill="#e05050" />
            <circle cx={12} cy={12} r={2.5} fill="#50b060" />
            <circle cx={18} cy={12} r={2.5} fill="#e0b030" />
            <circle cx={14} cy={20} r={2.5} fill="#6090d0" />
            <path d="M12 31l16-24" stroke="#e08020" strokeWidth={3} />
            <path d="M26 9l4-8 2 3z" fill="#b88a60" />
          </Svg>
        </TaskButton>
        <Tray>
          <TrayIcon>
            <Svg w={10} h={5}><path d="M5 0l5 5H0z" fill="#fff" /></Svg>
          </TrayIcon>
          <TrayIcon>
            <Svg w={18} h={18}><path d="M3 1v16M3 3h6l1 2h6l-2 4H8L7 9H3" fill="#fff" stroke="#fff" /></Svg>
          </TrayIcon>
          <TrayIcon>
            <Svg w={18} h={18}>
              <rect x={5} y={3} width={12} height={10} fill="#3a4858" stroke="#fff" />
              <path d="M8 16h6M2 1v6h3v9" fill="none" stroke="#fff" strokeWidth={1.5} />
            </Svg>
          </TrayIcon>
          <TrayIcon>
            <Svg w={18} h={16}>
              <path d="M1 5h3l4-4v14l-4-4H1z" fill="#dfe6ec" stroke="#fff" />
              <path d="M11 5a4 4 0 0 1 0 6M13 3a7 7 0 0 1 0 10" fill="none" stroke="#fff" />
            </Svg>
          </TrayIcon>
          <Clock>8:24 PM<br />4/26/2015</Clock>
          <ShowDesktop />
        </Tray>
      </Taskbar>
    </Window>
  </>
);

export default App;
